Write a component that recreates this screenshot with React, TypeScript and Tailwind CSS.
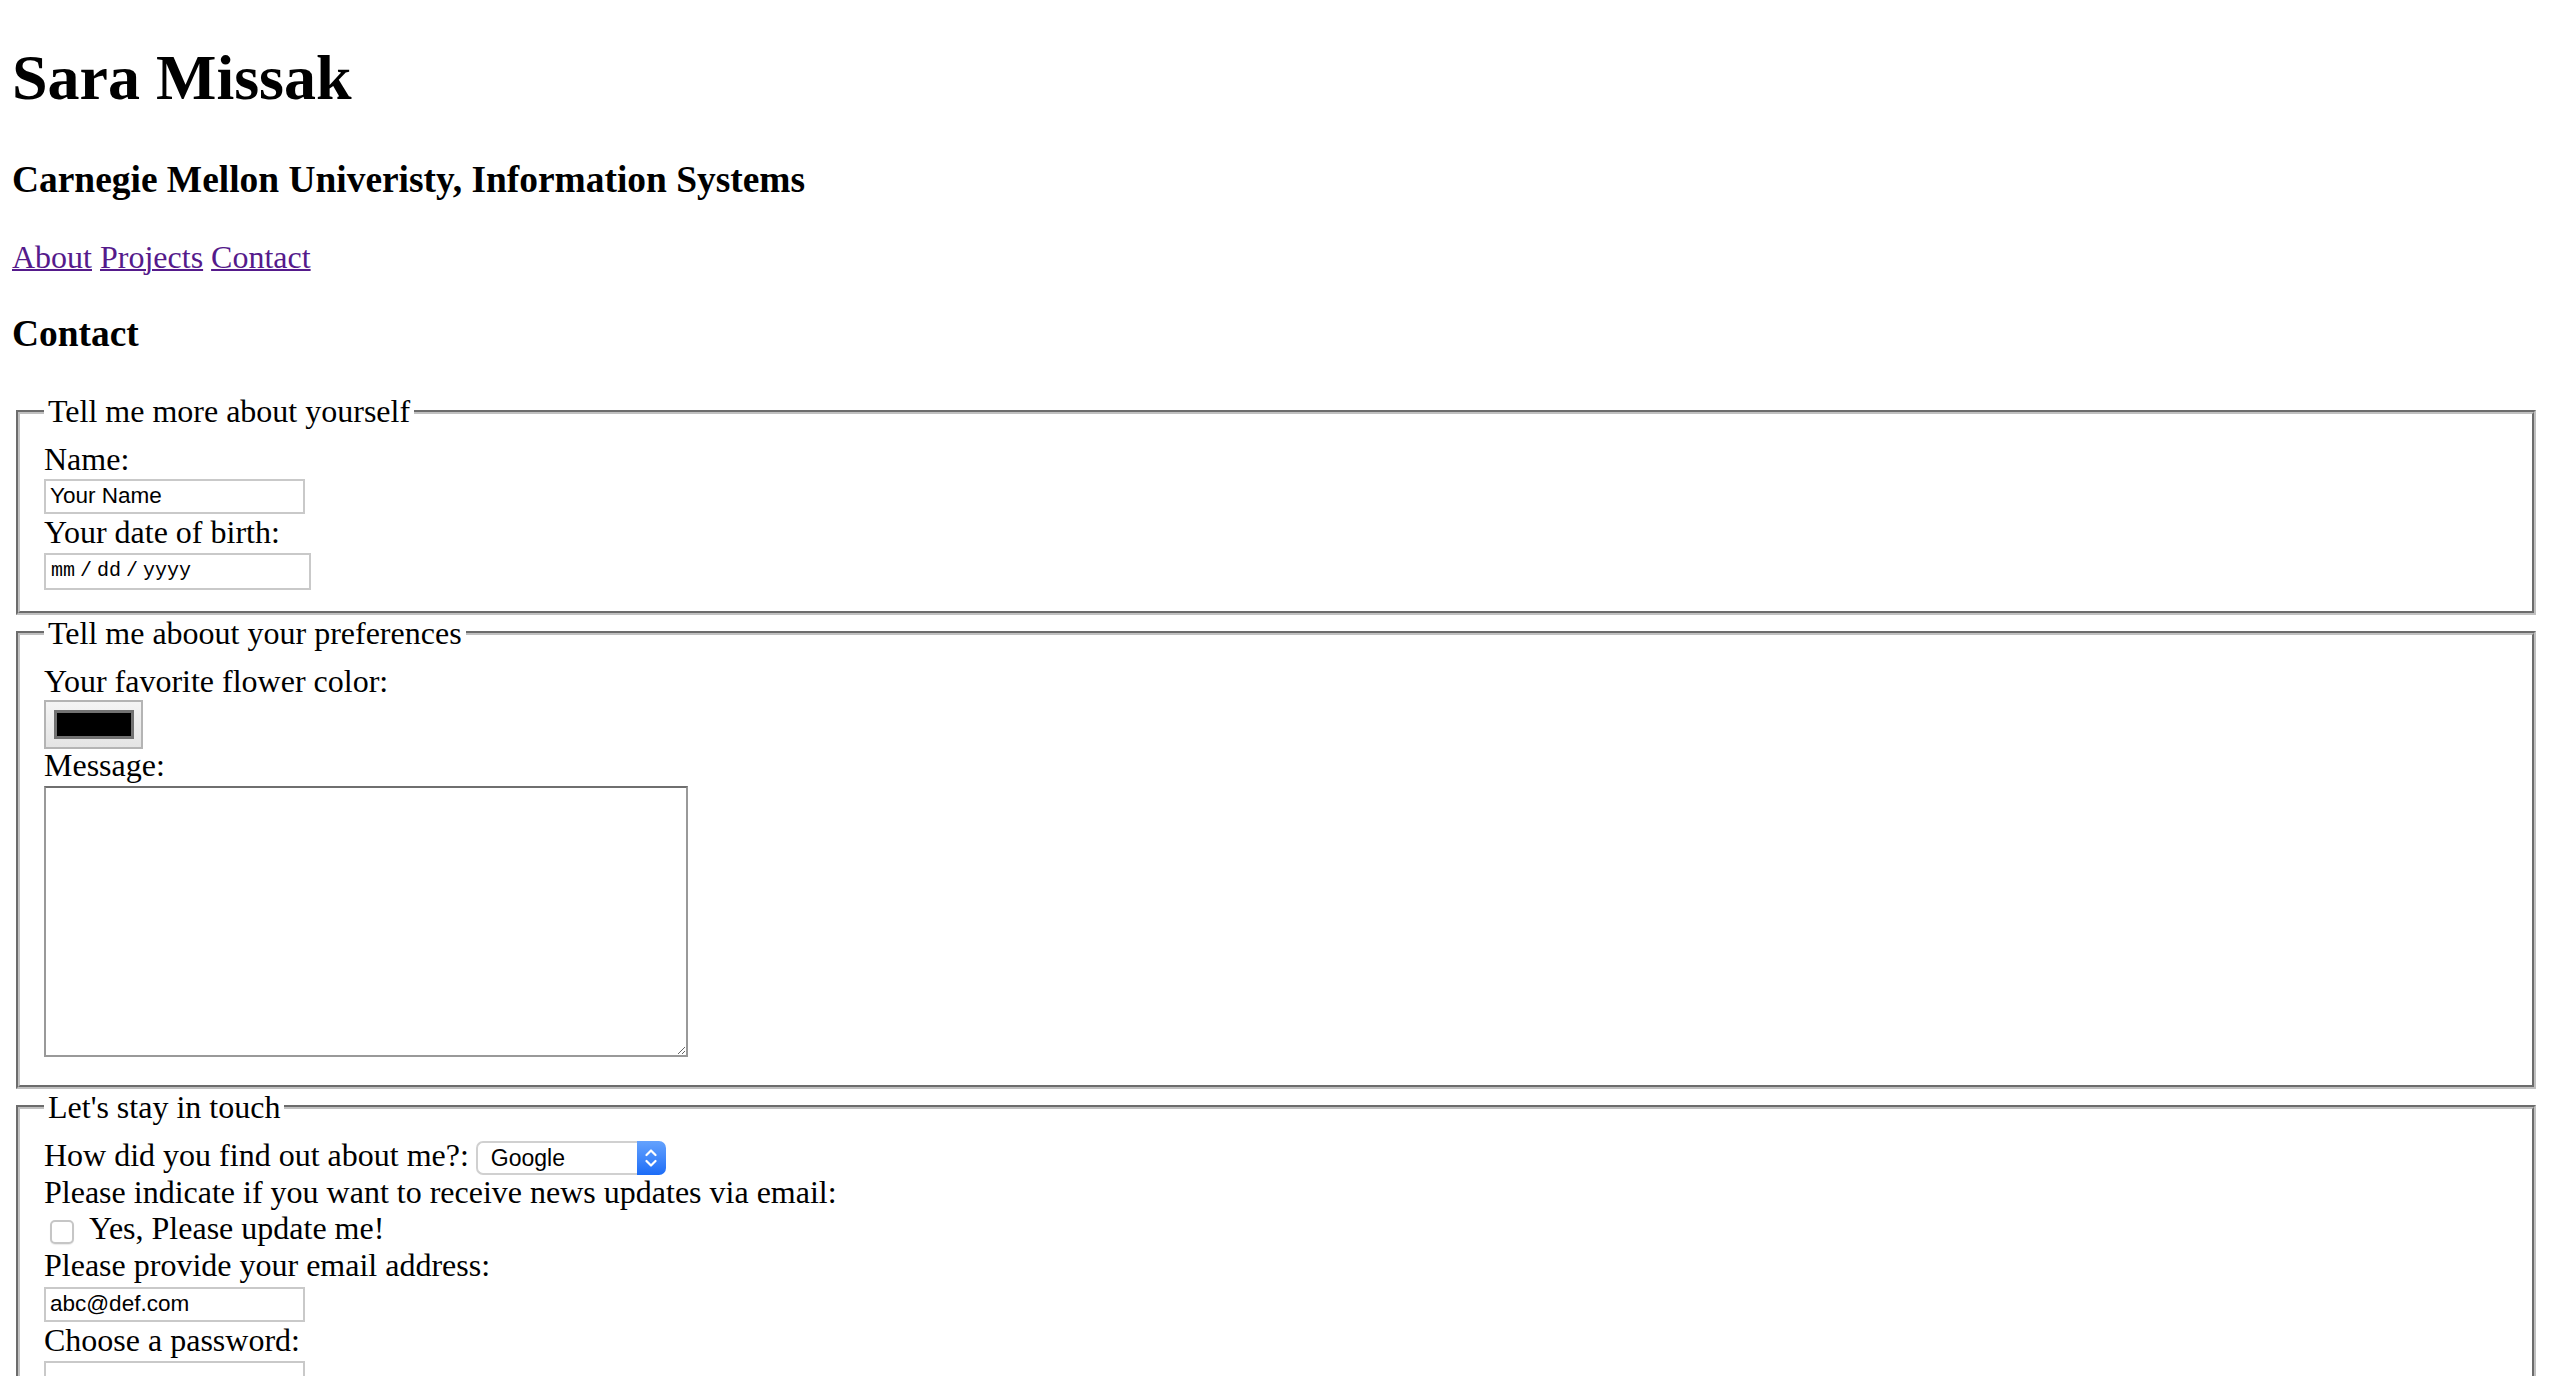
import type { ReactNode } from 'react';

interface RowProps {
  children: ReactNode;
}

function TextRow({ children }: RowProps) {
  return <div className="h-[36.8px] leading-[36.8px] whitespace-nowrap">{children}</div>;
}

interface GroupProps {
  legend: string;
  children: ReactNode;
}

function Group({ legend, children }: GroupProps) {
  return (
    <fieldset className="mx-[4px] border-4 border-[#c0c0c0] [--tw-border-style:groove] [border-style:groove] px-[24px] pt-[11.2px] pb-[20px]">
      <legend className="px-[4px] leading-[36.8px]">{legend}</legend>
      {children}
    </fieldset>
  );
}

const textInput =
  "block w-[261px] h-[35px] border-2 border-[#c9c9c9] bg-white px-[4px] font-['Liberation_Sans',sans-serif] text-[22.5px] text-black outline-none";

export default function App() {
  return (
    <div className="min-h-screen bg-white pl-[12px] pr-[16px] pt-[41px] font-['Liberation_Serif',serif] text-[32px] leading-[36.8px] text-black">
      <h1 className="text-[64px] font-bold leading-[73.6px]">Sara Missak</h1>
      <h3 className="mt-[43px] text-[37.44px] font-bold leading-[43px]">
        Carnegie Mellon Univeristy, Information Systems
      </h3>

      <p className="mt-[38px] leading-[36.8px]">
        <a href="#about" className="text-[#551a8b] underline decoration-2 underline-offset-[1px]">
          About
        </a>{' '}
        <a href="#projects" className="text-[#551a8b] underline decoration-2 underline-offset-[1px]">
          Projects
        </a>{' '}
        <a href="#contact" className="text-[#551a8b] underline decoration-2 underline-offset-[1px]">
          Contact
        </a>
      </p>

      <h3 className="mt-[36.5px] text-[37.44px] font-bold leading-[43px]">Contact</h3>

      <form className="mt-[38.4px]" onSubmit={(e) => e.preventDefault()}>
        <Group legend="Tell me more about yourself">
          <TextRow>Name:</TextRow>
          <input type="text" defaultValue="Your Name" className={`mt-[1px] ${textInput}`} />
          <TextRow>Your date of birth:</TextRow>
          <div className="mt-[2.2px] mb-[1px] flex h-[37px] w-[267px] items-center gap-[5px] border-2 border-[#c9c9c9] bg-white pl-[5px] font-['Liberation_Mono',monospace] text-[20px] text-black">
            <span>mm</span>
            <span>/</span>
            <span>dd</span>
            <span>/</span>
            <span>yyyy</span>
          </div>
        </Group>

        <Group legend="Tell me aboout your preferences">
          <TextRow>Your favorite flower color:</TextRow>
          <button
            type="button"
            className="flex h-[49px] w-[99px] items-center justify-center border-2 border-[#b4b4b4] bg-gradient-to-b from-[#f4f4f4] to-[#e4e4e4]"
          >
            <span className="block h-[29px] w-[80px] border-[3px] border-[#727272] bg-black" />
          </button>
          <div className="-mt-[1.5px]">
            <TextRow>Message:</TextRow>
          </div>
          <textarea className="mt-[1.6px] mb-[8px] block h-[271px] w-[644px] resize border-2 border-[#999999] border-t-[#6f6f6f] bg-white outline-none" />
        </Group>

        <Group legend="Let's stay in touch">
          <div className="flex h-[36.8px] items-start">
            <span className="leading-[36.8px] whitespace-nowrap">How did you find out about me?:</span>
            <div className="mt-[4.3px] ml-[7px] flex h-[34px]">
              <select
                defaultValue="Google"
                className="h-[34px] w-[161px] appearance-none rounded-l-[7px] border-2 border-r-0 border-[#d0d0d0] bg-white pt-0 pb-[2px] pl-[13px] font-['Liberation_Sans',sans-serif] text-[23px] leading-[30px] text-black outline-none"
              >
                <option>Google</option>
                <option>LinkedIn</option>
                <option>Friend</option>
                <option>Other</option>
              </select>
              <span className="flex h-[34px] w-[29px] items-center justify-center rounded-r-[7px] bg-gradient-to-b from-[#64a2fd] to-[#1b6cf7]">
                <svg width="12" height="22" viewBox="0 0 12 22" fill="none" stroke="white" strokeWidth="2.2" strokeLinecap="round" strokeLinejoin="round">
                  <polyline points="1.5,8 6,3.5 10.5,8" />
                  <polyline points="1.5,14 6,18.5 10.5,14" />
                </svg>
              </span>
            </div>
          </div>
          <TextRow>Please indicate if you want to receive news updates via email:</TextRow>
          <div className="flex h-[36.8px] items-start">
            <input
              type="checkbox"
              className="mt-[9.4px] ml-[6px] h-[24px] w-[24px] shrink-0 appearance-none rounded-[5px] border-2 border-[#c6c6c6] bg-white shadow-[0_1px_1px_rgba(0,0,0,0.08)]"
            />
            <span className="ml-[15px] leading-[36.8px] whitespace-nowrap">Yes, Please update me!</span>
          </div>
          <TextRow>Please provide your email address:</TextRow>
          <input type="email" defaultValue="abc@def.com" className={`mt-[3px] ${textInput}`} />
          <TextRow>Choose a password:</TextRow>
          <input type="password" className={`mt-[2.7px] ${textInput}`} />
          <div className="mt-[8px] flex h-[36.8px] items-center">
            <button
              type="submit"
              className="h-[34px] rounded-[7px] border-2 border-[#c6c6c6] bg-white px-[14px] font-['Liberation_Sans',sans-serif] text-[23px] text-black"
            >
              Submit
            </button>
          </div>
        </Group>
      </form>
    </div>
  );
}
